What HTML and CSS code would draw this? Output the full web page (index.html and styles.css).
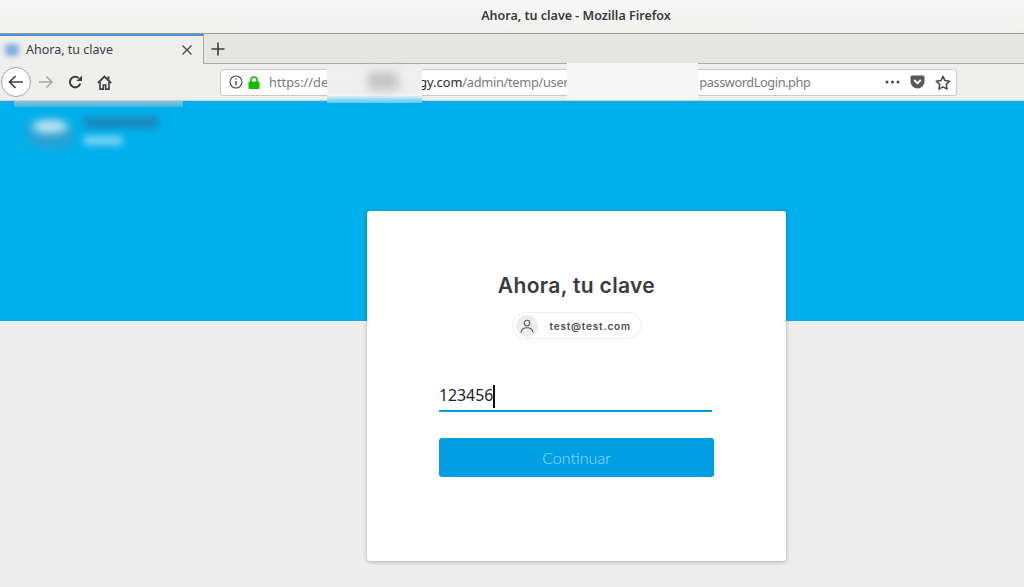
FILE: index.html
```html
<!DOCTYPE html>
<html lang="es">
<head>
<meta charset="utf-8">
<title>Ahora, tu clave - Mozilla Firefox</title>
<link rel="stylesheet" href="styles.css">
</head>
<body>
<div class="window">
  <header class="titlebar">Ahora, tu clave - Mozilla Firefox</header>
  <div class="tabbar">
    <div class="tab">
      <span class="favicon"></span>
      <span class="tab-label">Ahora, tu clave</span>
      <svg class="tab-close" width="12" height="12" viewBox="0 0 12 12"><path d="M1.500 1.500l9 9M10.500 1.500l-9 9" stroke="#4a4a4f" stroke-width="1.400" fill="none"/></svg>
    </div>
    <svg class="new-tab" width="14" height="14" viewBox="0 0 14 14"><path d="M7 0.500v13M0.500 7h13" stroke="#3c3c3f" stroke-width="1.600" fill="none"/></svg>
  </div>
  <nav class="toolbar">
    <button class="back" aria-label="Atrás">
      <svg width="18" height="16" viewBox="0 0 18 16"><path d="M16 8H2.500M8.500 2L2.500 8l6 6" stroke="#3f3f42" stroke-width="1.700" fill="none"/></svg>
    </button>
    <svg class="tool forward" width="16" height="14" viewBox="0 0 16 14"><path d="M1 7h13M8.500 1.500L14 7l-5.500 5.500" stroke="#a8a8a8" stroke-width="1.500" fill="none"/></svg>
    <svg class="tool reload" width="15" height="14" viewBox="0 0 15 14"><path d="M12.300 8.500A5.300 5.300 0 1 1 10.700 3" stroke="#3f3f42" stroke-width="2" fill="none"/><path d="M14 0.500v5.500H8.500z" fill="#3f3f42"/></svg>
    <svg class="tool home" width="15" height="15" viewBox="0 0 15 15"><path d="M0.900 8L7.500 1.500 14.100 8" stroke="#3f3f42" stroke-width="1.800" fill="none"/><path d="M3 7v7.100h3.300V10h2.400v4.100H12V7" stroke="#3f3f42" stroke-width="1.600" fill="none"/><rect x="10.500" y="1.500" width="2" height="3" fill="#3f3f42"/></svg>
    <div class="urlbar">
      <svg class="info" width="14" height="14" viewBox="0 0 14 14"><circle cx="7" cy="7" r="6" stroke="#4a4a4f" stroke-width="1.100" fill="none"/><path d="M7 6v4.200M7 3.500v1.300" stroke="#4a4a4f" stroke-width="1.400"/></svg>
      <svg class="lock" width="12" height="13" viewBox="0 0 12 13"><path d="M3 6V4a3 3 0 0 1 6 0v2" stroke="#12bc00" stroke-width="1.700" fill="none"/><rect x="0.500" y="5.500" width="11" height="7.500" rx="1" fill="#12bc00"/></svg>
      <div class="url"><span>https://de</span><span class="url-gap-a"></span><span class="domain">gy.com</span><span class="path">/admin/temp/user</span><span class="url-gap-b"></span><span class="path-end">passwordLogin.php</span></div>
      <div class="url-actions">
        <svg width="15" height="4" viewBox="0 0 15 4"><circle cx="2" cy="2" r="1.500" fill="#4a4a4f"/><circle cx="7.500" cy="2" r="1.500" fill="#4a4a4f"/><circle cx="13" cy="2" r="1.500" fill="#4a4a4f"/></svg>
        <svg width="15" height="14" viewBox="0 0 15 14"><path d="M2 0.500h11a1.500 1.500 0 0 1 1.500 1.500v4.500a7 7 0 0 1-14 0V2A1.500 1.500 0 0 1 2 0.500z" fill="#58585c"/><path d="M4.200 5l3.300 3.200L10.800 5" stroke="#fff" stroke-width="1.900" fill="none"/></svg>
        <svg width="16" height="15" viewBox="0 0 16 15"><path d="M8 1.300l2 4.300 4.700.6-3.500 3.200.9 4.700L8 11.800l-4.100 2.300.9-4.700L1.300 6.200 6 5.600z" stroke="#4a4a4f" stroke-width="1.500" stroke-linejoin="round" fill="none"/></svg>
      </div>
    </div>
  </nav>
  <main class="page">
    <section class="card">
      <h1 class="heading">Ahora, tu clave</h1>
      <div class="chip">
        <span class="avatar">
          <svg width="14" height="14" viewBox="0 0 14 14"><circle cx="7" cy="4" r="2.800" stroke="#555" stroke-width="1.100" fill="none"/><path d="M1 13.500c.4-3 2.600-4.700 6-4.700s5.600 1.700 6 4.700" stroke="#555" stroke-width="1.100" fill="none"/></svg>
        </span>
        <span class="chip-text">test@test.com</span>
      </div>
      <div class="field"><span class="field-value">123456</span><span class="caret"></span></div>
      <button class="submit">Continuar</button>
    </section>
  </main>
  <div class="smudge smudge-url-a"></div>
  <div class="smudge smudge-url-a-core"></div>
  <div class="smudge smudge-url-b"></div>
  <div class="smudge smudge-strip"></div>
  <div class="smudge smudge-logo-halo"></div>
  <div class="smudge smudge-logo-mark"></div>
  <div class="smudge smudge-logo-name"></div>
  <div class="smudge smudge-logo-sub"></div>
</div>
</body>
</html>
```
FILE: styles.css
```css
* { box-sizing: border-box; }
html, body { margin: 0; height: 100%; }
body { overflow: hidden; background: #ededed; }

.window {
  position: relative;
  width: 1024px;
  height: 587px;
  display: flex;
  flex-direction: column;
  overflow: hidden;
  font-family: "Noto Sans", "Open Sans", sans-serif;
}

.titlebar {
  flex: 0 0 34px;
  display: flex;
  align-items: center;
  justify-content: center;
  padding-left: 128px;
  padding-bottom: 2px;
  background: linear-gradient(#f8f8f8, #f0f0ef);
  border-bottom: 1px solid #9c9c98;
  color: #3a3a3a;
  font-size: 12.500px;
  font-weight: 600;
}

.tabbar {
  flex: 0 0 30px;
  display: flex;
  align-items: center;
  background: #e5e5e3;
  border-bottom: 1px solid #a8a8a5;
}
.tab {
  width: 204px;
  height: 30px;
  display: flex;
  align-items: center;
  padding: 0 10px 1px 5px;
  background: #eeeeec;
  border-top: 2px solid #4a90d9;
  border-right: 1px solid #a8a8a5;
  margin-bottom: -1px;
}
.favicon {
  width: 14px;
  height: 12px;
  margin-right: 7px;
  border-radius: 4px;
  background: #7fb0de;
  filter: blur(2.500px);
}
.tab-label { flex: 1; color: #3c3c3f; font-size: 12.500px; }
.new-tab { margin-left: 7px; }

.toolbar {
  flex: 0 0 37px;
  display: flex;
  align-items: center;
  background: #eeeeec;
  border-bottom: 1px solid #cfcfcd;
}
.back {
  width: 30px;
  height: 30px;
  margin-left: 1px;
  padding: 0;
  display: flex;
  align-items: center;
  justify-content: center;
  background: #fff;
  border: 1px solid #a5a5a3;
  border-radius: 50%;
}
.tool { flex: none; }
.forward { margin-left: 7px; }
.reload { margin-left: 14px; }
.home { margin-left: 14px; }

.urlbar {
  width: 737px;
  height: 27px;
  margin-left: 108px;
  display: flex;
  align-items: center;
  padding: 0 5px 0 8px;
  background: #fff;
  border: 1px solid #c8c8c6;
  border-radius: 3px;
}
.lock { margin-left: 5px; }
.url {
  flex: 1;
  display: flex;
  margin-left: 9px;
  color: #7a7a7a;
  font-size: 12.800px;
  white-space: nowrap;
}
.domain { color: #2a2a2e; }
.path { letter-spacing: -.3px; }
.path-end { letter-spacing: -.44px; }
.url-gap-a { width: 91px; }
.url-gap-b { width: 131px; }
.url-actions { display: flex; align-items: center; gap: 10px; }

.page {
  flex: 1;
  padding: 110px 0 0 367px;
  background: linear-gradient(#00b0ec 220px, #ededed 220px);
}
.card {
  width: 419px;
  height: 350px;
  padding: 61px 72px 0;
  background: #fff;
  border-radius: 3px;
  box-shadow: 0 1px 4px rgba(0, 0, 0, .28);
  display: flex;
  flex-direction: column;
  align-items: flex-start;
}
.heading {
  width: 275px;
  margin: 0;
  text-align: center;
  color: #3b3b3b;
  font-family: Inter, sans-serif;
  font-size: 21px;
  line-height: 28px;
  font-weight: 600;
  letter-spacing: .35px;
}
.chip {
  align-self: center;
  width: 130px;
  height: 27px;
  margin-top: 12px;
  padding-left: 3px;
  display: flex;
  align-items: center;
  border: 1px solid #ececec;
  border-radius: 14px;
}
.avatar {
  width: 22px;
  height: 22px;
  display: flex;
  align-items: center;
  justify-content: center;
  border-radius: 50%;
  background: #ededed;
}
.chip-text {
  margin-left: 12px;
  color: #4a4a4a;
  font-family: Inter, sans-serif;
  font-size: 10px;
  font-weight: 600;
  letter-spacing: .8px;
}
.field {
  width: 273px;
  height: 35px;
  margin-top: 38px;
  display: flex;
  align-items: flex-end;
  border-bottom: 2px solid #00a0e3;
  padding-bottom: 2px;
}
.field-value {
  color: #222;
  font-family: "Noto Sans", sans-serif;
  font-size: 15.800px;
  line-height: 23px;
  padding-bottom: 1px;
}
.caret { width: 2px; height: 23px; background: #111; }
.submit {
  width: 275px;
  height: 39px;
  margin-top: 26px;
  padding: 0;
  border: 0;
  border-radius: 3px;
  background: #009fe3;
  color: #96dbf8;
  font-family: Lato, sans-serif;
  font-size: 16px;
  font-weight: 300;
}

.smudge { position: absolute; pointer-events: none; }
.smudge-url-a {
  left: 327px; top: 68px; width: 95px; height: 35px;
  background: linear-gradient(#f0f0f0 0, #eeeeee 70%, #f4f4f4 78%, #b3e3f5 85%, #62c8ee 100%);
}
.smudge-url-a-core {
  left: 368px; top: 72px; width: 30px; height: 18px;
  background: #c4c4c4;
  filter: blur(5px);
}
.smudge-url-b {
  left: 567px; top: 63px; width: 131px; height: 37px;
  background: #f6f6f6;
}
.smudge-strip {
  left: 14px; top: 101px; width: 169px; height: 6px;
  background: linear-gradient(#8cc4da, #3fb5e2);
}
.smudge-logo-halo {
  left: 26px; top: 122px; width: 48px; height: 26px;
  background: #2f9fd0;
  border-radius: 50%;
  filter: blur(6px);
}
.smudge-logo-mark {
  left: 32px; top: 120px; width: 36px; height: 13px;
  background: #c4e9f7;
  border-radius: 50%;
  filter: blur(4px);
}
.smudge-logo-name {
  left: 84px; top: 117px; width: 74px; height: 11px;
  background: #1a86b8;
  filter: blur(3.500px);
}
.smudge-logo-sub {
  left: 84px; top: 136px; width: 38px; height: 9px;
  background: #7fd6f5;
  filter: blur(3.500px);
}
```
